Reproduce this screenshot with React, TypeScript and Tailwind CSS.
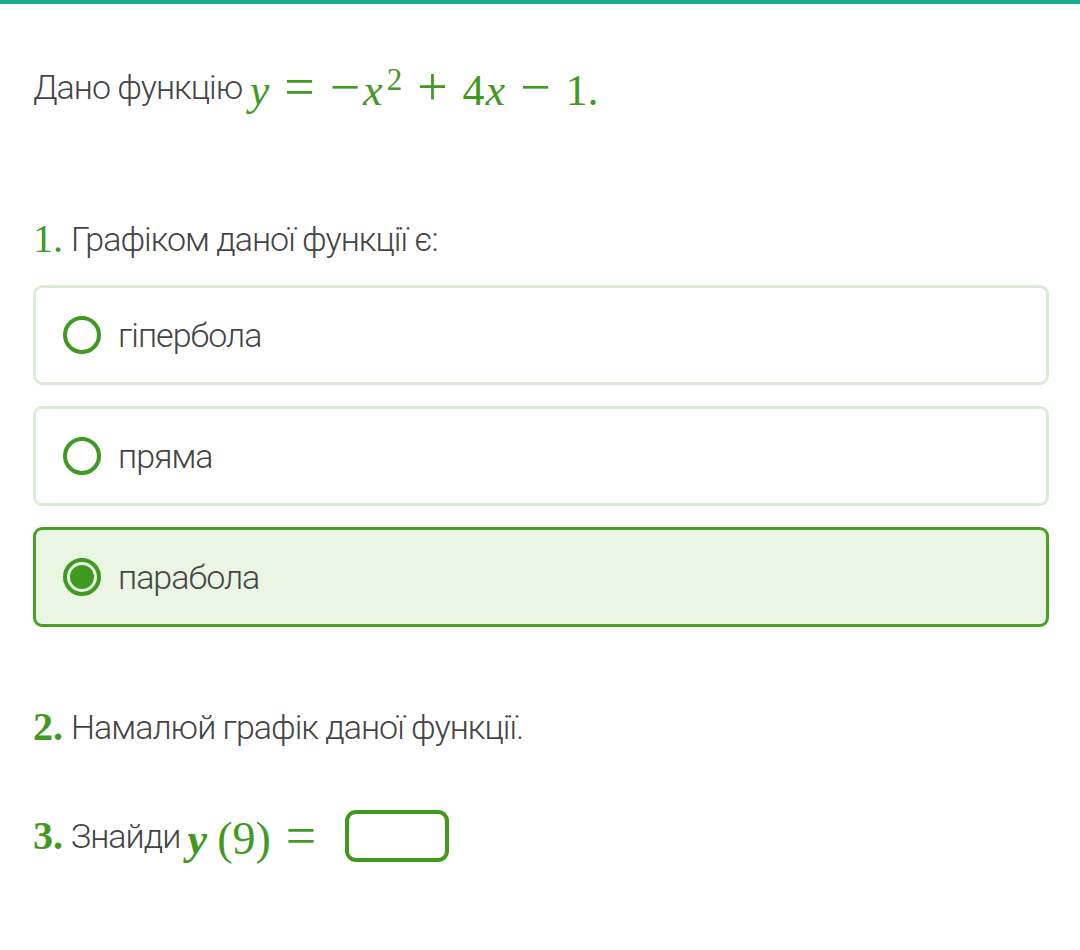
import React from "react";

const G = "text-[#3f9a1f]";
const mathFont = { fontFamily: '"Liberation Serif", serif' };

function Radio({ checked }: { checked?: boolean }) {
  return (
    <span className="flex h-[38px] w-[38px] shrink-0 items-center justify-center rounded-full border-[4px] border-[#3f9a1f]">
      {checked && <span className="h-[24px] w-[24px] rounded-full bg-[#3f9a1f]" />}
    </span>
  );
}

function Option({ label, checked }: { label: string; checked?: boolean }) {
  return (
    <div
      className={`flex h-[100px] items-center gap-[17px] rounded-[9px] border-[3px] pl-[27px] ${
        checked ? "border-[#4a9f24] bg-[#eaf5e4]" : "border-[#dcebd5] bg-white"
      }`}
    >
      <Radio checked={checked} />
      <span className="text-[34px] font-light tracking-[-1px] text-[#444]">{label}</span>
    </div>
  );
}

// binary / relation operator with math spacing, drawn a bit larger like KaTeX
function Op({ children }: { children: React.ReactNode }) {
  return <span className="mx-[15px] text-[54px] leading-none">{children}</span>;
}

export default function App() {
  return (
    <div
      className="min-h-[950px] w-[1080px] bg-white text-[#444]"
      style={{ fontFamily: 'Roboto, "Noto Sans", sans-serif' }}
    >
      <div className="h-[4px] bg-[#1aaa8a]" />

      <div className="px-[33px]">
        {/* intro */}
        <p className="mt-[59px] flex h-[48px] items-center text-[34px] font-light tracking-[-1px]">
          Дано функцію&nbsp;
          <span className={`${G} flex items-baseline text-[44px] leading-none tracking-normal`} style={mathFont}>
            <i>y</i>
            <Op>=</Op>
            <span className="text-[54px]">−</span>
            <i className="ml-[3px]">x</i>
            <sup className="ml-[4px] text-[31px]">2</sup>
            <Op>+</Op>
            <span>4</span>
            <i className="ml-[1px]">x</i>
            <Op>−</Op>
            <span>1.</span>
          </span>
        </p>

        {/* question 1 */}
        <p className="mt-[104px] flex h-[48px] items-center text-[34px] font-light tracking-[-1px]">
          <span className={`${G} mr-[8px] text-[40px] tracking-normal`} style={mathFont}>1.</span>
          Графіком даної функції є:
        </p>

        <div className="mt-[22px] flex w-[1016px] flex-col gap-[21px]">
          <Option label="гіпербола" />
          <Option label="пряма" />
          <Option label="парабола" checked />
        </div>

        {/* question 2 */}
        <p className="mt-[76px] flex h-[48px] items-center text-[34px] font-light tracking-[-1px]">
          <span className={`${G} mr-[8px] text-[40px] font-bold tracking-normal`} style={mathFont}>2.</span>
          Намалюй графік даної функції.
        </p>

        {/* question 3 */}
        <div className="mt-[57px] flex h-[56px] items-center text-[34px] font-light tracking-[-1px]">
          <span className={`${G} mr-[8px] text-[40px] font-bold tracking-normal`} style={mathFont}>3.</span>
          Знайди&nbsp;
          <span className={`${G} flex items-baseline text-[44px] leading-none tracking-normal`} style={mathFont}>
            <i className="font-bold">y</i>
            <span className="ml-[10px] text-[46px]">(9)</span>
            <Op>=</Op>
          </span>
          <span className="ml-[14px] h-[52px] w-[104px] rounded-[11px] border-[4px] border-[#3f9a1f]" />
        </div>
      </div>
    </div>
  );
}
